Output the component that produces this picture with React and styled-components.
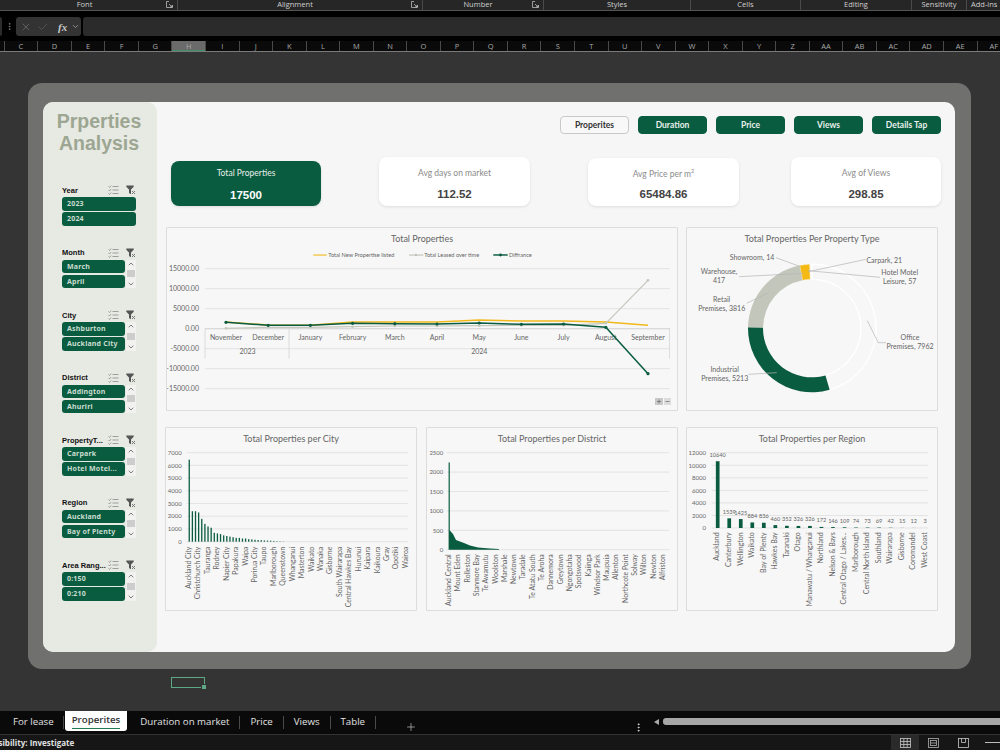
import React from "react";
import styled, { createGlobalStyle } from "styled-components";
import { X, Check, ChevronDown, ChevronUp, EllipsisVertical, Plus } from "lucide-react";

const GREEN = "#0a5c40";
const CHART_FONT = `Lato, "Open Sans", sans-serif`;
const UI_FONT = `"Open Sans", "Noto Sans", sans-serif`;

const GlobalStyle = createGlobalStyle`
  html, body {
    margin: 0;
    padding: 0;
    background: #343434;
  }
  * {
    box-sizing: border-box;
  }
`;

const Window = styled.div`
  width: 1000px;
  height: 750px;
  display: flex;
  flex-direction: column;
  overflow: hidden;
  background: #000;
  font-family: ${UI_FONT};
`;

/* ribbon */
const Ribbon = styled.div`
  height: 11px;
  flex: none;
  display: flex;
  padding-left: 2px;
  background: #262626;
  border-bottom: 1px solid #555;
`;

const RibbonGroup = styled.div`
  position: relative;
  flex: 0 0 ${props => props.$w}px;
  height: 10px;
  padding-right: ${props => (props.$launcher ? 10 : 0)}px;
  padding-left: ${props => (props.$last ? 4 : 0)}px;
  text-align: ${props => (props.$last ? "left" : "center")};
  border-right: ${props => (props.$last ? "none" : "1px solid #4a4a4a")};
  font-size: 7.5px;
  line-height: 9px;
  color: #d0d0d0;
  white-space: nowrap;
`;

const Launcher = styled.svg`
  position: absolute;
  right: 4px;
  top: 1px;
`;

const FormulaRow = styled.div`
  height: 19px;
  margin-top: 6px;
  flex: none;
  display: flex;
  align-items: stretch;
  background: #000;
`;

const NameEnd = styled.div`
  width: 2px;
  background: #2b2b2b;
  border-radius: 0 2px 2px 0;
`;

const DotsWrap = styled.div`
  width: 14px;
  display: flex;
  align-items: center;
  justify-content: center;
  color: #8a8a8a;
`;

const FxBox = styled.div`
  width: 65px;
  display: flex;
  align-items: center;
  gap: 5px;
  padding-left: 4px;
  background: #333;
  border-radius: 3px;
`;

const FxText = styled.span`
  margin-left: 4px;
  margin-right: -1px;
  font-family: "Liberation Serif", serif;
  font-style: italic;
  font-weight: 700;
  font-size: 11px;
  color: #c8c8c8;
`;

const FormulaInput = styled.div`
  flex: 1;
  margin-left: 2px;
  background: #2b2b2b;
  border-radius: 3px 0 0 3px;
`;

const ColumnHeader = styled.div`
  height: 11px;
  margin-top: 5px;
  flex: none;
  display: flex;
  padding-left: 3.7px;
  background: #0a0a0a;
  border-bottom: 1px solid #7a7a7a;
`;

const ColumnCell = styled.div`
  flex: 0 0 33.55px;
  height: 10px;
  text-align: center;
  font-size: 7.5px;
  line-height: 10px;
  color: #a8a8a8;
  border-left: 1px solid #4a4a4a;
  background: ${props => (props.$active ? "#6a6a6a" : "transparent")};
  box-shadow: ${props => (props.$active ? "inset 0 -1px 0 #3f8f68" : "none")};
`;

/* sheet area */
const Sheet = styled.div`
  flex: 1;
  min-height: 0;
  padding: 31px 0 0 28px;
  background: #343434;
`;

const OuterPanel = styled.div`
  width: 943px;
  height: 586px;
  padding: 19px 16px 17px 15px;
  background: #70716f;
  border-radius: 14px;
`;

const Board = styled.div`
  height: 100%;
  display: flex;
  background: #f6f6f6;
  border-radius: 10px;
  overflow: hidden;
`;

const SelectedCell = styled.div`
  position: relative;
  width: 34px;
  height: 11px;
  margin: 8px 0 0 143px;
  border: 1.5px solid #5fa886;
  &::after {
    content: "";
    position: absolute;
    right: -3px;
    bottom: -3px;
    width: 4px;
    height: 4px;
    background: #5fa886;
    border: 1px solid #343434;
  }
`;

/* slicers */
const Sidebar = styled.aside`
  flex: 0 0 114px;
  width: 114px;
  min-width: 0;
  padding: 8px 21px 0 19px;
  background: #e7e9e3;
  border-radius: 10px;
`;

const BoardTitle = styled.h1`
  height: 73px;
  margin: 0 -19px 0 -19px;
  text-align: center;
  font-family: "Liberation Sans", sans-serif;
  font-size: 19.5px;
  line-height: 22px;
  font-weight: 700;
  color: #9ca692;
`;

const SlicerBox = styled.section`
  height: 62.5px;
`;

const SlicerHead = styled.div`
  height: 14px;
  display: flex;
  align-items: center;
  font-family: "Liberation Sans", sans-serif;
  font-size: 7.5px;
  font-weight: 700;
  color: #111;
`;

const SlicerLabel = styled.span`
  flex: 1;
  min-width: 0;
  white-space: nowrap;
`;

const IconGap = styled.span`
  flex: none;
  width: 7px;
`;

const SlicerBody = styled.div`
  display: flex;
  gap: 1.5px;
`;

const SlicerItems = styled.div`
  flex: 1;
  min-width: 0;
  display: flex;
  flex-direction: column;
  gap: 1.5px;
`;

const SlicerItem = styled.div`
  height: 13.5px;
  padding-left: 5px;
  background: ${GREEN};
  border-radius: 3px;
  font-family: "Noto Sans", sans-serif;
  font-size: 7px;
  line-height: 13px;
  font-weight: 700;
  letter-spacing: 0.2px;
  color: #c9dccf;
  white-space: nowrap;
  overflow: hidden;
`;

const ScrollTrack = styled.div`
  flex: 0 0 10px;
  display: flex;
  flex-direction: column;
  align-items: center;
  justify-content: space-between;
  background: #f1f1f0;
  color: #666;
`;

const ScrollThumb = styled.div`
  width: 8px;
  height: 7px;
  background: #cdcdcd;
`;

/* main */
const Main = styled.main`
  flex: 1;
  min-width: 0;
  padding-top: 14px;
`;

const NavBar = styled.nav`
  display: flex;
  justify-content: flex-end;
  gap: 9px;
  padding-right: 14px;
`;

const NavButton = styled.div`
  width: 69px;
  height: 18px;
  text-align: center;
  font-family: ${CHART_FONT};
  font-size: 8.5px;
  font-weight: 700;
  line-height: 17px;
  border-radius: 4px;
  color: ${props => (props.$active ? "#333" : "#e8f0eb")};
  background: ${props => (props.$active ? "#f8f8f8" : GREEN)};
  border: 1px solid ${props => (props.$active ? "#c9c9c9" : GREEN)};
`;

const KpiRow = styled.div`
  height: 49px;
  margin: 23px 0 0 14px;
  display: flex;
  align-items: flex-end;
`;

const KpiCard = styled.div`
  width: ${props => props.$w}px;
  height: ${props => props.$h}px;
  margin-left: ${props => props.$left}px;
  display: flex;
  flex-direction: column;
  align-items: center;
  justify-content: space-between;
  padding: ${props => (props.$primary ? "6px 0 4px" : "10px 0 5px")};
  border-radius: 8px;
  background: ${props => (props.$primary ? GREEN : "#fff")};
  box-shadow: 0 1px 3px rgba(0, 0, 0, 0.1);
`;

const KpiLabel = styled.div`
  font-family: ${CHART_FONT};
  font-size: 8.5px;
  line-height: 12px;
  color: ${props => (props.$primary ? "#e6efe9" : "#8a8a8a")};
  sup {
    font-size: 5.5px;
    line-height: 0;
  }
`;

const KpiValue = styled.div`
  font-family: "Liberation Sans", sans-serif;
  font-size: 11.5px;
  line-height: 14px;
  font-weight: 700;
  color: ${props => (props.$primary ? "#fff" : "#444")};
`;

const ChartRow = styled.div`
  display: flex;
  gap: ${props => props.$gap}px;
  margin: ${props => props.$top}px 0 0 ${props => props.$left}px;
`;

const ChartPanel = styled.section`
  flex: none;
  width: ${props => props.$w}px;
  height: 184px;
  margin-left: ${props => props.$pull || 0}px;
  background: #f7f7f7;
  border: 1px solid #dcdcdc;
  border-radius: 1px;
`;

const ChartTitle = styled.h2`
  height: 22px;
  margin: 0;
  text-align: center;
  font-family: ${CHART_FONT};
  font-size: 9px;
  line-height: 22px;
  font-weight: 400;
  color: #666;
`;

const ChartSvg = styled.svg`
  display: block;
`;

const AxisText = styled.text`
  font-family: ${CHART_FONT};
  font-size: ${props => props.$size || 6}px;
  fill: #666;
`;

/* tabs and status */
const TabBar = styled.div`
  height: 23px;
  flex: none;
  display: flex;
  align-items: flex-start;
  padding-left: 13px;
  background: #0a0a0a;
`;

const Tab = styled.div`
  height: ${props => (props.$active ? 20 : 22)}px;
  flex: none;
  position: relative;
  margin-left: ${props => props.$left}px;
  padding: ${props => (props.$active ? "0 7px" : "0")};
  font-size: 9.7px;
  line-height: ${props => (props.$active ? 18 : 22)}px;
  font-weight: ${props => (props.$active ? 600 : 400)};
  color: ${props => (props.$active ? "#333" : "#e2e2e2")};
  background: ${props => (props.$active ? "#fff" : "transparent")};
  border-radius: 0 0 3px 3px;
  white-space: nowrap;
  &::after {
    content: "";
    display: ${props => (props.$active ? "block" : "none")};
    position: absolute;
    left: 7px;
    right: 7px;
    bottom: 2px;
    height: 1.5px;
    background: #1e7a52;
  }
`;

const TabSep = styled.div`
  flex: none;
  width: 1px;
  height: 13px;
  margin: 5px 0 0 ${props => props.$left}px;
  background: #4a4a4a;
`;

const AddTab = styled.div`
  flex: none;
  width: 12px;
  margin: 5px 0 0 29px;
  color: #cfcfcf;
`;

const TabDots = styled.div`
  flex: none;
  margin: 5px 0 0 216px;
  color: #ddd;
`;

const ScrollLeft = styled.div`
  flex: none;
  width: 0;
  height: 0;
  margin: 8px 0 0 10px;
  border: 3.5px solid transparent;
  border-right: 5px solid #aaa;
  border-left: none;
`;

const HScroll = styled.div`
  flex: 1;
  height: 7px;
  margin: 7px 0 0 4px;
  background: #a6a6a6;
  border-radius: 3px 0 0 3px;
`;

const StatusBar = styled.div`
  height: 16px;
  flex: none;
  display: flex;
  align-items: center;
  background: #161616;
  border-top: 1px solid #333;
`;

const StatusText = styled.div`
  flex: 1;
  min-width: 0;
  margin-left: -24px;
  font-size: 8px;
  font-weight: 700;
  color: #e0e0e0;
  white-space: nowrap;
`;

const ViewButton = styled.div`
  flex: none;
  width: 28px;
  height: 15px;
  margin-right: ${props => props.$right || 0}px;
  display: flex;
  align-items: center;
  justify-content: center;
  background: ${props => (props.$active ? "#2a2a2a" : "transparent")};
`;

const ZoomMinus = styled.div`
  flex: none;
  width: 15px;
  height: 1px;
  background: #bdbdbd;
`;

const ribbonGroups = [
  { name: "Font", w: 176, launcher: true },
  { name: "Alignment", w: 245, launcher: true },
  { name: "Number", w: 121, launcher: true },
  { name: "Styles", w: 147 },
  { name: "Cells", w: 110 },
  { name: "Editing", w: 111 },
  { name: "Sensitivity", w: 55 },
  { name: "Add-ins", w: 40, last: true }
];

const columns = "C D E F G H I J K L M N O P Q R S T U V W X Y Z AA AB AC AD AE AF".split(" ");

const slicers = [
  { label: "Year", items: ["2023", "2024"] },
  { label: "Month", items: ["March", "April"], scroll: true },
  { label: "City", items: ["Ashburton", "Auckland City"], scroll: true },
  { label: "District", items: ["Addington", "Ahuriri"], scroll: true },
  { label: "PropertyT...", items: ["Carpark", "Hotel Motel..."], scroll: true },
  { label: "Region", items: ["Auckland", "Bay of Plenty"], scroll: true },
  { label: "Area Rang...", items: ["0:150", "0:210"], scroll: true }
];

const kpis = [
  { label: "Total Properties", value: "17500", w: 150, h: 45, left: 0, primary: true },
  { label: "Avg days on market", value: "112.52", w: 151, h: 49, left: 58 },
  { label: <>Avg Price per m<sup>2</sup></>, value: "65484.86", w: 151, h: 48, left: 58 },
  { label: "Avg of Views", value: "298.85", w: 150, h: 49, left: 52 }
];

const months = ["November", "December", "January", "February", "March", "April", "May", "June", "July", "August", "September"];
const newListed = [322, 325, 325.3, 322, 322, 322, 320, 321, 321, 322, 325.3];
const leased = [328.3, 327.3, 327.3, 326.7, 326, 326, 325.7, 325.3, 325.3, 323.3, 280.3];
const diffrance = [322.3, 325.3, 325.3, 323.3, 323.7, 324, 323, 324.3, 324, 327.3, 373.7];

const cityNames = ["Auckland City", "Christchurch City", "Tauranga", "Rodney", "Napier City", "Papakura", "Waipa", "Porirua City", "Taupo", "Marlborough", "Queenstown", "Whanganui", "Masterton", "Waikato", "Wanaka", "Gisborne", "South Wairarapa", "Central Hawkes Bay", "Hurunui", "Kaipara", "Kaikoura", "Gray", "Opotiki", "Wairoa"];
const cityBars = [6450, 2400, 2400, 2300, 1800, 1400, 1200, 1100, 700, 650, 600, 500, 450, 400, 350, 300, 300, 250, 250, 200, 180, 150, 130, 120, 100, 90, 80, 60, 40, 30, 20];

const districtNames = ["Auckland Central", "Mount Eden", "Rolleston", "Stanmore Bay", "Te Awamutu", "Woolston", "Marshale", "Newtown", "Taradale", "Te Atatu South", "Te Aroha", "Dannemora", "Greytown", "Ngongotaha", "Spotswood", "Kaiinga", "Windsor Park", "Maupuia", "Allenton", "Northcote Point", "Solway", "Wilton", "Newton", "Alfriston"];

const regions = [
  ["Auckland", 10640], ["Canterbury", 1539], ["Wellington", 1425], ["Waikato", 884], ["Bay of Plenty", 836],
  ["Hawkes Bay", 460], ["Taranaki", 352], ["Otago", 326], ["Manawatu / Whanganui", 326], ["Northland", 172],
  ["Nelson & Bays", 146], ["Central Otago / Lakes...", 109], ["Marlborough", 74], ["Central North Island", 73],
  ["Southland", 69], ["Wairarapa", 42], ["Gisborne", 15], ["Coromandel", 12], ["West Coast", 3]
];

const donutLabels = [
  { lines: ["Showroom, 14"], x: 752, y: 260 },
  { lines: ["Warehouse,", "417"], x: 719, y: 274 },
  { lines: ["Retail", "Premises, 3816"], x: 721.7, y: 301.5 },
  { lines: ["Industrial", "Premises, 5213"], x: 724.7, y: 372 },
  { lines: ["Carpark, 21"], x: 884.3, y: 263 },
  { lines: ["Hotel Motel", "Leisure, 57"], x: 899.7, y: 275 },
  { lines: ["Office", "Premises, 7962"], x: 910, y: 339.5 }
];

const leaders = [
  "776,257.7 800.7,266.7",
  "739.3,276.7 803.3,273.3",
  "746.7,303.3 768.3,292.7",
  "748.3,374.3 776.7,372.7",
  "866,259.3 808.3,271.7",
  "880,277.3 808.3,270.7",
  "886,342.7 878.3,342.7 867.3,320.7"
];

const pts = (ys, x0 = 226, step = 42.2) => ys.map((y, i) => `${x0 + i * step},${y}`).join(" ");

const polar = (r, a, cx = 812, cy = 328.3) => {
  const t = (a * Math.PI) / 180;
  return `${(cx + r * Math.sin(t)).toFixed(2)} ${(cy - r * Math.cos(t)).toFixed(2)}`;
};

const ringPath = (from, to, R = 64, r = 49) => {
  const large = to - from > 180 ? 1 : 0;
  return `M${polar(R, from)} A${R} ${R} 0 ${large} 1 ${polar(R, to)} L${polar(r, to)} A${r} ${r} 0 ${large} 0 ${polar(r, from)} Z`;
};

const MultiSelectIcon = () => (
  <svg width="11" height="10" viewBox="0 0 11 10" fill="none" stroke="#8b8b8b" strokeWidth="0.8" style={{ flex: "none" }}>
    <path d="M0.5 1.5l1 1 1.6-2M0.5 5l1 1 1.6-2M0.5 8.5l1 1 1.6-2" />
    <path d="M4.5 1.5h6M4.5 5h6M4.5 8.5h6" />
  </svg>
);

const ClearFilterIcon = () => (
  <svg width="10" height="10" viewBox="0 0 10 10" style={{ flex: "none" }}>
    <path d="M0.3 0.5h7.4v1.2L5 4.6v4.6L3 8V4.6L0.3 1.7z" fill="#555" />
    <path d="M6 6l3 3M9 6l-3 3" stroke="#777" strokeWidth="1" />
  </svg>
);

const LauncherIcon = () => (
  <Launcher width="7" height="7" viewBox="0 0 7 7" fill="none" stroke="#bbb" strokeWidth="0.8">
    <path d="M3 .5H.5v6h6V4M3 3l3 3M6 4v2H4" />
  </Launcher>
);

const Slicer = ({ label, items, scroll }) => (
  <SlicerBox>
    <SlicerHead>
      <SlicerLabel>{label}</SlicerLabel>
      <MultiSelectIcon />
      <IconGap />
      <ClearFilterIcon />
    </SlicerHead>
    <SlicerBody>
      <SlicerItems>
        {items.map(item => (
          <SlicerItem key={item}>{item}</SlicerItem>
        ))}
      </SlicerItems>
      {scroll && (
        <ScrollTrack>
          <ChevronUp size={8} strokeWidth={2.5} />
          <ScrollThumb />
          <ChevronDown size={8} strokeWidth={2.5} />
        </ScrollTrack>
      )}
    </SlicerBody>
  </SlicerBox>
);

const Gridlines = ({ x1, x2, ys, labels, labelX, size }) => (
  <>
    {ys.map((y, i) => (
      <g key={y}>
        <line x1={x1} x2={x2} y1={y} y2={y} stroke="#dedede" strokeWidth="0.8" />
        <AxisText x={labelX} y={y + 2.2} textAnchor="end" $size={size}>
          {labels[i]}
        </AxisText>
      </g>
    ))}
  </>
);

const RotatedLabels = ({ names, x0, step, top, size }) =>
  names.map((name, i) => {
    const x = x0 + i * step;
    return (
      <AxisText
        key={name}
        x={x}
        y={top}
        textAnchor="end"
        transform={`rotate(-90 ${x} ${top})`}
        dominantBaseline="middle"
        $size={size}
      >
        {name}
      </AxisText>
    );
  });

const Markers = ({ ys, color, r = 1.4 }) =>
  ys.map((y, i) => <circle key={i} cx={226 + i * 42.2} cy={y} r={r} fill={color} />);

const LineChart = () => {
  const gridY = [268.7, 288.7, 308.7, 328.7, 348.7, 368.7, 388.7];
  const labels = ["15000.00", "10000.00", "5000.00", "0.00", "-5000.00", "-10000.00", "-15000.00"];
  return (
    <ChartSvg width="510" height="160" viewBox="167 250 510 160">
      <Gridlines x1={205} x2={670} ys={gridY} labels={labels} labelX={199} size={7} />
      <path d="M205 328.7v30M289 328.7v30M669.5 328.7v30" stroke="#d4d4d4" strokeWidth="0.8" />
      <line x1="205" x2="670" y1="328.7" y2="328.7" stroke="#cfcfcf" strokeWidth="0.8" />

      <line x1="313.3" x2="326.7" y1="255" y2="255" stroke="#f2b91d" strokeWidth="1.2" />
      <AxisText x="328.3" y="257" $size={5.6}>Total New Propertise listed</AxisText>
      <line x1="409" x2="423.3" y1="255" y2="255" stroke="#bfc2b8" strokeWidth="1.2" />
      <circle cx="416" cy="255" r="1.2" fill="#bfc2b8" />
      <AxisText x="424.3" y="257" $size={5.6}>Total Leased over time</AxisText>
      <line x1="493.3" x2="507.7" y1="255" y2="255" stroke={GREEN} strokeWidth="1.4" />
      <circle cx="500.5" cy="255" r="1.4" fill={GREEN} />
      <AxisText x="509" y="257" $size={5.6}>Diffrance</AxisText>

      {months.map((m, i) => (
        <AxisText key={m} x={226 + i * 42.2} y={339.6} textAnchor="middle" $size={7}>
          {m}
        </AxisText>
      ))}
      <AxisText x="247.5" y="354.3" textAnchor="middle" $size={7}>2023</AxisText>
      <AxisText x="479.3" y="354.3" textAnchor="middle" $size={7}>2024</AxisText>

      <polyline points={pts(newListed)} fill="none" stroke="#f2b91d" strokeWidth="1.4" />
      <polyline points={pts(leased)} fill="none" stroke="#c4c7bd" strokeWidth="1.2" />
      <Markers ys={leased} color="#c4c7bd" r={1.3} />
      <polyline points={pts(diffrance)} fill="none" stroke={GREEN} strokeWidth="1.5" />
      <Markers ys={diffrance} color={GREEN} r={1.6} />

      <rect x="655" y="398" width="8" height="7" fill="#c9c9c9" />
      <rect x="664" y="398" width="7" height="7" fill="#dcdcdc" />
      <path d="M657 401.5h4M659 399.5v4M665.5 401.5h4" stroke="#666" strokeWidth="0.7" />
    </ChartSvg>
  );
};

const DonutChart = () => (
  <ChartSvg width="250" height="160" viewBox="687 250 250 160">
    <path d={ringPath(0, 164)} fill="#f7f7f7" stroke="#fff" strokeWidth="1.4" />
    <path d={ringPath(164, 271)} fill={GREEN} />
    <path d={ringPath(271, 349)} fill="#c3c7bb" />
    <path d={ringPath(349, 357.8)} fill="#f5b914" stroke="#fbe9b0" strokeWidth="0.4" />
    {leaders.map(p => (
      <polyline key={p} points={p} fill="none" stroke="#b4b4b4" strokeWidth="0.7" />
    ))}
    {donutLabels.map(l =>
      l.lines.map((line, i) => (
        <AxisText key={line} x={l.x} y={l.y + i * 9} textAnchor="middle" $size={7}>
          {line}
        </AxisText>
      ))
    )}
  </ChartSvg>
);

const CityChart = () => {
  const ys = [452.7, 465.4, 478.1, 490.8, 503.5, 516.2, 528.9, 541.7];
  const labels = ["7000", "6000", "5000", "4000", "3000", "2000", "1000", "0"];
  return (
    <ChartSvg width="250" height="160" viewBox="166 450 250 160">
      <Gridlines x1={186.7} x2={408.3} ys={ys} labels={labels} labelX={181.7} />
      {cityBars.map((v, i) => {
        const h = (v * 89) / 7000;
        return <rect key={i} x={188.6 + i * 3.13} y={541.7 - h} width="1.3" height={h} fill={GREEN} />;
      })}
      <RotatedLabels names={cityNames} x0={189.3} step={9.43} top={546.7} size={6.9} />
    </ChartSvg>
  );
};

const DistrictChart = () => {
  const ys = [452.7, 472.1, 491.5, 510.9, 530.3, 549.7];
  const labels = ["2500", "2000", "1500", "1000", "500", "0"];
  return (
    <ChartSvg width="250" height="160" viewBox="427 450 250 160">
      <Gridlines x1={446.7} x2={669.3} ys={ys} labels={labels} labelX={443.3} />
      <path
        d="M448.6 549.7V462.6H449.8V530.5L453 534L456 540L460 541.5L464 543L470 545.5L478 547.5L490 548.5L499 549L499 549.7Z"
        fill={GREEN}
      />
      <RotatedLabels names={districtNames} x0={449.3} step={9.3} top={554.3} size={6.9} />
    </ChartSvg>
  );
};

const RegionChart = () => {
  const ys = [452.7, 465.3, 477.8, 490.4, 502.9, 515.5, 528];
  const labels = ["12000", "10000", "8000", "6000", "4000", "2000", "0"];
  return (
    <ChartSvg width="250" height="160" viewBox="687 450 250 160">
      <Gridlines x1={711.7} x2={928.3} ys={ys} labels={labels} labelX={706} />
      {regions.map(([name, v], i) => {
        const h = (v * 75.3) / 12000;
        const x = 717.7 + i * 11.53;
        return (
          <g key={name}>
            <rect x={x - 1.85} y={528 - h} width="3.7" height={h} fill={GREEN} />
            <AxisText x={x} y={528 - h - 4.5} textAnchor="middle" $size={5.6}>
              {v}
            </AxisText>
          </g>
        );
      })}
      <RotatedLabels names={regions.map(r => r[0])} x0={717.7} step={11.53} top={532.3} size={7} />
    </ChartSvg>
  );
};

const NormalViewIcon = () => (
  <svg width="11" height="10" viewBox="0 0 11 10" fill="none" stroke="#c8c8c8" strokeWidth="0.8">
    <rect x="0.5" y="0.5" width="10" height="9" />
    <path d="M0.5 3.5h10M0.5 6.5h10M3.8 .5v9M7.2 .5v9" />
  </svg>
);

const PageViewIcon = () => (
  <svg width="11" height="10" viewBox="0 0 11 10" fill="none" stroke="#b0b0b0" strokeWidth="0.8">
    <rect x="0.5" y="0.5" width="10" height="9" />
    <rect x="2.5" y="2.5" width="6" height="5" />
    <path d="M3 5h5" />
  </svg>
);

const BreakViewIcon = () => (
  <svg width="11" height="10" viewBox="0 0 11 10" fill="none" stroke="#c8c8c8" strokeWidth="0.8">
    <rect x="0.5" y="0.5" width="10" height="9" />
    <path d="M3.5 .5v4h4v-4" />
  </svg>
);

const tabs = [
  { name: "For lease", left: 0 },
  { name: "Properites", left: 1, active: true, sep: 9 },
  { name: "Duration on market", left: 13 },
  { name: "Price", left: 10, sep: 10 },
  { name: "Views", left: 10, sep: 10 },
  { name: "Table", left: 10, sep: 10 }
];

export default function App() {
  return (
    <>
      <GlobalStyle />
      <Window>
        <Ribbon>
          {ribbonGroups.map(g => (
            <RibbonGroup key={g.name} $w={g.w} $launcher={g.launcher} $last={g.last}>
              {g.name}
              {g.launcher && <LauncherIcon />}
            </RibbonGroup>
          ))}
        </Ribbon>
        <FormulaRow>
          <NameEnd />
          <DotsWrap>
            <EllipsisVertical size={9} />
          </DotsWrap>
          <FxBox>
            <X size={12} color="#7a7a7a" strokeWidth={1.2} />
            <Check size={12} color="#666" strokeWidth={1.2} />
            <FxText>fx</FxText>
            <ChevronDown size={9} color="#aaa" />
          </FxBox>
          <FormulaInput />
        </FormulaRow>
        <ColumnHeader>
          {columns.map(c => (
            <ColumnCell key={c} $active={c === "H"}>
              {c}
            </ColumnCell>
          ))}
        </ColumnHeader>
        <Sheet>
          <OuterPanel>
            <Board>
              <Sidebar>
                <BoardTitle>
                  Prperties
                  <br />
                  Analysis
                </BoardTitle>
                {slicers.map(s => (
                  <Slicer key={s.label} {...s} />
                ))}
              </Sidebar>
              <Main>
                <NavBar>
                  <NavButton $active>Properites</NavButton>
                  <NavButton>Duration</NavButton>
                  <NavButton>Price</NavButton>
                  <NavButton>Views</NavButton>
                  <NavButton>Details Tap</NavButton>
                </NavBar>
                <KpiRow>
                  {kpis.map(k => (
                    <KpiCard key={k.value} $w={k.w} $h={k.h} $left={k.left} $primary={k.primary}>
                      <KpiLabel $primary={k.primary}>{k.label}</KpiLabel>
                      <KpiValue $primary={k.primary}>{k.value}</KpiValue>
                    </KpiCard>
                  ))}
                </KpiRow>
                <ChartRow $gap={8} $top={21} $left={9}>
                  <ChartPanel $w={512}>
                    <ChartTitle>Total Properties</ChartTitle>
                    <LineChart />
                  </ChartPanel>
                  <ChartPanel $w={252}>
                    <ChartTitle>Total Properties Per Property Type</ChartTitle>
                    <DonutChart />
                  </ChartPanel>
                </ChartRow>
                <ChartRow $gap={9} $top={16} $left={8}>
                  <ChartPanel $w={252}>
                    <ChartTitle>Total Properties per City</ChartTitle>
                    <CityChart />
                  </ChartPanel>
                  <ChartPanel $w={252}>
                    <ChartTitle>Total Properties per District</ChartTitle>
                    <DistrictChart />
                  </ChartPanel>
                  <ChartPanel $w={252} $pull={-1}>
                    <ChartTitle>Total Properties per Region</ChartTitle>
                    <RegionChart />
                  </ChartPanel>
                </ChartRow>
              </Main>
            </Board>
          </OuterPanel>
          <SelectedCell />
        </Sheet>
        <TabBar>
          {tabs.map(t => (
            <React.Fragment key={t.name}>
              {t.sep && <TabSep $left={t.sep} />}
              <Tab $active={t.active} $left={t.left}>
                {t.name}
              </Tab>
            </React.Fragment>
          ))}
          <TabSep $left={10} />
          <AddTab>
            <Plus size={12} strokeWidth={1.3} />
          </AddTab>
          <TabDots>
            <EllipsisVertical size={11} />
          </TabDots>
          <ScrollLeft />
          <HScroll />
        </TabBar>
        <StatusBar>
          <StatusText>Accessibility: Investigate</StatusText>
          <ViewButton $active><NormalViewIcon /></ViewButton>
          <ViewButton $right={2}><PageViewIcon /></ViewButton>
          <ViewButton $right={8}><BreakViewIcon /></ViewButton>
          <ZoomMinus />
        </StatusBar>
      </Window>
    </>
  );
}
